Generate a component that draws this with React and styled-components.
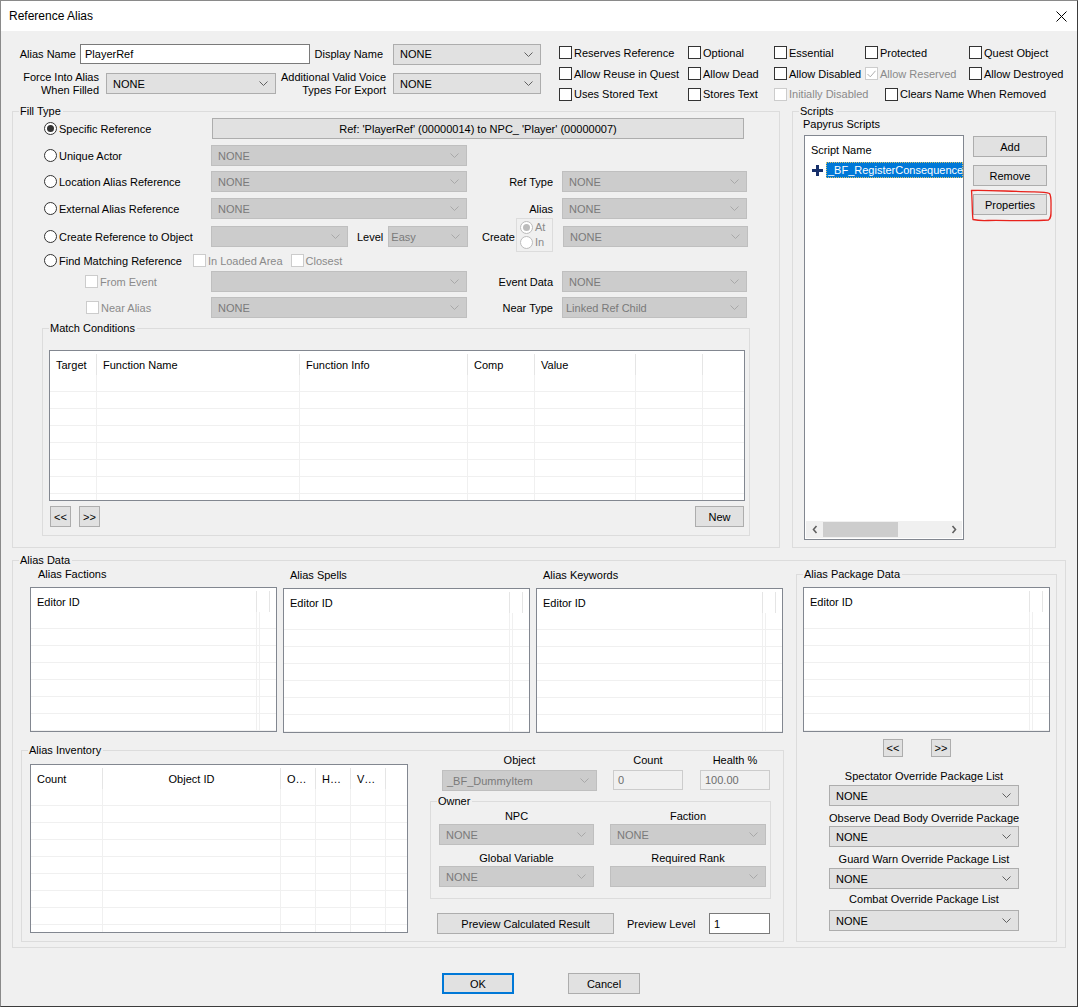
import React from 'react'
import styled, { createGlobalStyle } from 'styled-components'

const GlobalStyle = createGlobalStyle`
  html, body { margin: 0; padding: 0; background: #f0f0f0; }
  body { font-family: 'Liberation Sans', Arial, sans-serif; font-size: 11px; color: #000; }
  * { box-sizing: border-box; }
`

const Window = styled.div`
  width: 1078px;
  height: 1007px;
  border: 1px solid #8a8a8a;
  border-right-color: #3c3c3c;
  border-bottom-color: #3c3c3c;
  background: #f0f0f0;
  display: flex;
  flex-direction: column;
  overflow: hidden;
`

const TitleBar = styled.div`
  height: 30px;
  flex: none;
  background: #fff;
  display: flex;
  align-items: center;
  justify-content: space-between;
  padding: 0 10px 0 8px;
  font-size: 12px;
`

const Body = styled.div`
  flex: 1;
  padding: 11px 0 0 11px;
  display: flex;
  flex-direction: column;
`

const TopSection = styled.div`
  display: flex;
  height: 62px;
`

const TopFields = styled.div`
  width: 529px;
  padding-top: 2px;
  display: flex;
  flex-direction: column;
  gap: 9px;
`

const FieldRow = styled.div`
  display: flex;
  align-items: center;
  height: ${(p) => p.$h || 21}px;
`

const FieldLabel = styled.div`
  width: ${(p) => p.$w}px;
  text-align: right;
  line-height: 13px;
  flex: none;
`

const TextInput = styled.div`
  width: ${(p) => p.$w}px;
  height: ${(p) => p.$h || 20}px;
  margin-left: ${(p) => p.$ml || 0}px;
  flex: none;
  display: flex;
  align-items: center;
  padding-left: 4px;
  background: ${(p) => (p.$disabled ? '#f0f0f0' : '#fff')};
  border: 1px solid ${(p) => (p.$disabled ? '#cccccc' : '#7a7a7a')};
  color: ${(p) => (p.$disabled ? '#6d6d6d' : '#000')};
`

const ComboBox = styled.div`
  width: ${(p) => p.$w}px;
  height: ${(p) => p.$h || 21}px;
  margin-left: ${(p) => p.$ml || 0}px;
  margin-top: ${(p) => p.$mt || 0}px;
  flex: none;
  display: flex;
  align-items: center;
  padding-left: ${(p) => p.$pl ?? 6}px;
  background: ${(p) => (p.$disabled ? '#cccccc' : '#e1e1e1')};
  border: 1px solid ${(p) => (p.$disabled ? '#bfbfbf' : '#adadad')};
  color: ${(p) => (p.$disabled ? '#7a7a7a' : '#000')};
  white-space: nowrap;
  overflow: hidden;
`

const ChevronSvg = styled.svg`
  margin-left: auto;
  margin-right: 7px;
  flex: none;
`

const Combo = ({ children, disabled, ...rest }) => (
  <ComboBox $disabled={disabled} {...rest}>
    <span>{children}</span>
    <ChevronSvg width="9" height="5" viewBox="0 0 9 5">
      <path d="M0.5 0.5L4.5 4.5L8.5 0.5" fill="none" stroke={disabled ? '#a8a8a8' : '#606060'} />
    </ChevronSvg>
  </ComboBox>
)

const Button = styled.div`
  width: ${(p) => p.$w}px;
  height: ${(p) => p.$h || 21}px;
  margin-left: ${(p) => p.$ml || 0}px;
  flex: none;
  display: flex;
  align-items: center;
  justify-content: center;
  background: #e1e1e1;
  border: 1px solid ${(p) => (p.$default ? '#0078d7' : '#adadad')};
  box-shadow: ${(p) => (p.$default ? 'inset 0 0 0 1px #0078d7' : 'none')};
  white-space: nowrap;
`

const ChecksGrid = styled.div`
  margin-left: 18px;
  display: grid;
  grid-template-columns: 129px 86px 91px 104px 100px;
  grid-auto-rows: 21px;
`

const Option = styled.div`
  display: flex;
  align-items: center;
  gap: 2px;
  white-space: nowrap;
  height: ${(p) => p.$h || 21}px;
  padding-left: ${(p) => p.$indent || 0}px;
  margin-left: ${(p) => p.$ml || 0}px;
  color: ${(p) => (p.$disabled ? '#8a8a8a' : '#000')};
`

const Box = styled.span`
  width: 13px;
  height: 13px;
  flex: none;
  border: 1px solid ${(p) => (p.$disabled ? '#cccccc' : '#333')};
  background: #fff;
  display: flex;
  align-items: center;
  justify-content: center;
`

const RadioDot = styled.span`
  width: 13px;
  height: 13px;
  flex: none;
  border-radius: 50%;
  border: 1px solid ${(p) => (p.$disabled ? '#bcbcbc' : '#333')};
  background: #fff;
  display: flex;
  align-items: center;
  justify-content: center;

  &::after {
    content: '';
    width: 7px;
    height: 7px;
    border-radius: 50%;
    background: ${(p) => (p.$disabled ? '#bcbcbc' : '#333')};
    display: ${(p) => (p.$checked ? 'block' : 'none')};
  }
`

const Check = ({ label, checked, disabled, ...rest }) => (
  <Option $disabled={disabled} {...rest}>
    <Box $disabled={disabled}>
      {checked && (
        <svg width="9" height="8" viewBox="0 0 9 8">
          <path d="M0.5 4L3.3 6.8L8.5 0.8" fill="none" stroke={disabled ? '#adadad' : '#333'} />
        </svg>
      )}
    </Box>
    {label}
  </Option>
)

const Radio = ({ label, checked, disabled, ...rest }) => (
  <Option $disabled={disabled} {...rest}>
    <RadioDot $checked={checked} $disabled={disabled} />
    {label}
  </Option>
)

const MiddleRow = styled.div`
  display: flex;
  gap: 12px;
`

const Group = styled.fieldset`
  margin: 0;
  padding: 0;
  border: 1px solid #dcdcdc;
  min-width: 0;
  flex: none;
  width: ${(p) => p.$w}px;
  height: ${(p) => p.$h}px;
  margin-top: ${(p) => p.$mt || 0}px;
  margin-left: ${(p) => p.$ml || 0}px;
`

const Legend = styled.legend`
  margin-left: 6px;
  padding: 0 2px 0 1px;
  height: 14px;
  line-height: 14px;
`

const FillGrid = styled.div`
  display: grid;
  grid-template-columns: 198px 257px 94px 186px;
  grid-template-rows: 27px 26px 27px 28px 26px 19px 26px 21px;
  align-items: start;
`

const Cell = styled.div`
  display: flex;
  align-items: center;
  grid-column: ${(p) => p.$span || 'auto'};
  height: ${(p) => p.$h || 21}px;
`

const SideLabel = styled.div`
  height: 21px;
  display: flex;
  align-items: center;
  justify-content: flex-end;
  padding-right: 9px;
  gap: 1px;
`

const MiniGroup = styled.div`
  width: 37px;
  height: 34px;
  margin-top: -4px;
  border: 1px solid #dcdcdc;
  display: flex;
  flex-direction: column;
  justify-content: center;
  padding-left: 3px;
`

const InlineLabel = styled.span`
  margin-left: ${(p) => p.$ml || 0}px;
  white-space: nowrap;
`

const GroupInner = styled.div`
  padding: ${(p) => p.$pad || '0'};
`

const NavRow = styled.div`
  display: flex;
  align-items: center;
  margin-top: ${(p) => p.$mt || 5}px;
  margin-left: ${(p) => p.$ml || 0}px;
`

const ListBox = styled.div`
  width: ${(p) => p.$w}px;
  height: ${(p) => p.$h}px;
  flex: none;
  background: #fff;
  border: 1px solid #828790;
  overflow: hidden;
`

const ListHeader = styled.div`
  display: flex;
  height: 24px;
`

const HeaderCell = styled.div`
  flex: ${(p) => (p.$w ? 'none' : '1')};
  width: ${(p) => (p.$w ? `${p.$w}px` : 'auto')};
  padding: 0 6px;
  display: flex;
  align-items: center;
  justify-content: ${(p) => (p.$center ? 'center' : 'flex-start')};
  border-right: ${(p) => (p.$w ? '1px solid #e5e5e5' : 'none')};
  white-space: nowrap;
  overflow: hidden;
  margin: 3px 0 0;
`

const ListRow = styled.div`
  display: flex;
  height: 17px;
  border-bottom: 1px solid #f0f0f0;
`

const RowCell = styled.div`
  flex: ${(p) => (p.$w ? 'none' : '1')};
  width: ${(p) => (p.$w ? `${p.$w}px` : 'auto')};
  border-right: ${(p) => (p.$w ? '1px solid #f0f0f0' : 'none')};
`

const ListView = ({ w, h, cols, rows = 8 }) => (
  <ListBox $w={w} $h={h}>
    <ListHeader>
      {cols.map((c, i) => (
        <HeaderCell key={i} $w={c.w} $center={c.center}>
          {c.label}
        </HeaderCell>
      ))}
    </ListHeader>
    {Array.from({ length: rows }).map((_, r) => (
      <ListRow key={r}>
        {cols.map((c, i) => (
          <RowCell key={i} $w={c.w} />
        ))}
      </ListRow>
    ))}
  </ListBox>
)

const ScriptsInner = styled.div`
  padding-left: 10px;
`

const Caption = styled.div`
  line-height: 14px;
  height: 14px;
  margin-top: ${(p) => p.$mt || 0}px;
  padding-left: ${(p) => p.$pl || 0}px;
  text-align: ${(p) => (p.$center ? 'center' : 'left')};
  white-space: nowrap;
`

const ScriptsRow = styled.div`
  display: flex;
  margin-top: 4px;
`

const ScriptList = styled.div`
  width: 160px;
  height: 405px;
  margin-left: 1px;
  background: #fff;
  border: 1px solid #828790;
  display: flex;
  flex-direction: column;
  overflow: hidden;
`

const ScriptHeader = styled.div`
  height: 25px;
  display: flex;
  align-items: center;
  padding: 3px 0 0 6px;
`

const ScriptItem = styled.div`
  height: 18px;
  display: flex;
  align-items: center;
  padding-left: 7px;
  gap: 3px;
  white-space: nowrap;
  overflow: hidden;
`

const Selected = styled.span`
  flex: 1;
  min-width: 0;
  height: 16px;
  line-height: 16px;
  padding: 0 2px;
  background: #0078d7;
  color: #fff;
  outline: 1px dotted #d8c56a;
  outline-offset: -1px;
  overflow: hidden;
  text-overflow: clip;
`

const Spacer = styled.div`
  flex: 1;
`

const HScroll = styled.div`
  height: 17px;
  margin: 0 1px 1px;
  background: #f0f0f0;
  display: flex;
  align-items: center;
`

const ScrollArrow = styled.span`
  width: 17px;
  height: 17px;
  display: flex;
  align-items: center;
  justify-content: center;
`

const Thumb = styled.span`
  width: 75px;
  height: 15px;
  background: #cdcdcd;
`

const ButtonColumn = styled.div`
  margin-left: 9px;
  margin-top: 1px;
  display: flex;
  flex-direction: column;
  gap: 8px;
`

const Marked = styled.div`
  position: relative;
`

const MarkSvg = styled.svg`
  position: absolute;
  left: -3px;
  top: -5px;
  pointer-events: none;
`

const DataRow = styled.div`
  display: flex;
`

const LeftArea = styled.div`
  width: 771px;
  flex: none;
  display: flex;
  flex-direction: column;
`

const ListsRow = styled.div`
  display: flex;
  gap: 6px;
  padding-left: 17px;
`

const ListColumn = styled.div`
  display: flex;
  flex-direction: column;
`

const ListGap = styled.div`
  height: 6px;
`

const InvInner = styled.div`
  display: flex;
  align-items: flex-start;
  padding: 0 0 0 8px;
`

const InvListWrap = styled.div`
  padding-top: 7px;
`

const ObjectArea = styled.div`
  width: 341px;
  margin-left: 22px;
  margin-top: -4px;
  display: flex;
  flex-direction: column;
`

const ObjTopRow = styled.div`
  display: flex;
`

const ObjCol = styled.div`
  width: ${(p) => p.$w}px;
  margin-left: ${(p) => p.$ml}px;
  display: flex;
  flex-direction: column;
  align-items: center;
  gap: 2px;
`

const ObjCaption = styled.div`
  line-height: 15px;
  height: 15px;
`

const OwnerGrid = styled.div`
  display: grid;
  grid-template-columns: 155px 156px;
  column-gap: 16px;
  padding-left: 8px;
`

const OwnerCell = styled.div`
  display: flex;
  flex-direction: column;
  align-items: center;
  padding-top: ${(p) => p.$pt || 1}px;
  gap: 1px;
`

const PreviewRow = styled.div`
  display: flex;
  align-items: center;
  margin-top: 14px;
  padding: 0 1px 0 7px;
`

const PkgInner = styled.div`
  padding: 6px 0 0 6px;
`

const PkgStack = styled.div`
  width: 190px;
  margin-left: 26px;
  display: flex;
  flex-direction: column;
`

const Footer = styled.div`
  display: flex;
  justify-content: center;
  gap: 54px;
  margin-top: 25px;
  padding-right: 7px;
`

const editorCols = [{ label: 'Editor ID', w: 226 }, { label: '', w: 3 }, { label: '' }]

const App = () => (
  <Window>
    <GlobalStyle />
    <TitleBar>
      <span>Reference Alias</span>
      <svg width="11" height="11" viewBox="0 0 11 11">
        <path d="M0.5 0.5L10.5 10.5M10.5 0.5L0.5 10.5" stroke="#000" strokeWidth="1" />
      </svg>
    </TitleBar>
    <Body>
      <TopSection>
        <TopFields>
          <FieldRow $h={20}>
            <FieldLabel $w={64}>Alias Name</FieldLabel>
            <TextInput $w={230} $ml={4}>PlayerRef</TextInput>
            <FieldLabel $w={73}>Display Name</FieldLabel>
            <Combo $w={148} $ml={10}>NONE</Combo>
          </FieldRow>
          <FieldRow>
            <FieldLabel $w={87}>
              Force Into Alias
              <br />
              When Filled
            </FieldLabel>
            <Combo $w={170} $ml={7}>NONE</Combo>
            <FieldLabel $w={110}>
              Additional Valid Voice
              <br />
              Types For Export
            </FieldLabel>
            <Combo $w={148} $ml={7}>NONE</Combo>
          </FieldRow>
        </TopFields>
        <ChecksGrid>
          <Check label="Reserves Reference" />
          <Check label="Optional" />
          <Check label="Essential" />
          <Check label="Protected" />
          <Check label="Quest Object" />
          <Check label="Allow Reuse in Quest" />
          <Check label="Allow Dead" />
          <Check label="Allow Disabled" />
          <Check label="Allow Reserved" checked disabled />
          <Check label="Allow Destroyed" />
          <Check label="Uses Stored Text" $h={20} />
          <Check label="Stores Text" $h={20} />
          <Check label="Initially Disabled" disabled $h={20} />
          <Check label="Clears Name When Removed" $ml={20} $h={20} />
        </ChecksGrid>
      </TopSection>

      <MiddleRow>
        <Group $w={768} $h={444}>
          <Legend>Fill Type</Legend>
          <FillGrid>
            <Radio label="Specific Reference" checked $indent={31} />
            <Cell $span="2 / 5">
              <Button $w={532} $ml={1}>
                Ref: 'PlayerRef' (00000014) to NPC_ 'Player' (00000007)
              </Button>
            </Cell>

            <Radio label="Unique Actor" $indent={31} />
            <Combo $w={256} disabled>NONE</Combo>
            <span />
            <span />

            <Radio label="Location Alias Reference" $indent={31} />
            <Combo $w={256} disabled>NONE</Combo>
            <SideLabel>Ref Type</SideLabel>
            <Combo $w={185} disabled>NONE</Combo>

            <Radio label="External Alias Reference" $indent={31} />
            <Combo $w={256} disabled>NONE</Combo>
            <SideLabel>Alias</SideLabel>
            <Combo $w={185} disabled>NONE</Combo>

            <Radio label="Create Reference to Object" $indent={31} />
            <Cell>
              <Combo $w={137} disabled />
              <InlineLabel $ml={9}>Level</InlineLabel>
              <Combo $w={80} $ml={5} $pl={2} disabled>
                Easy
              </Combo>
            </Cell>
            <SideLabel>
              <span>Create</span>
              <MiniGroup>
                <Radio label="At" checked disabled $h={15} />
                <Radio label="In" disabled $h={15} />
              </MiniGroup>
            </SideLabel>
            <Combo $w={185} $ml={1} disabled>
              NONE
            </Combo>

            <Cell $span="1 / -1" $h={17}>
              <Radio label="Find Matching Reference" $indent={31} $h={17} />
              <Check label="In Loaded Area" disabled $ml={11} $h={17} />
              <Check label="Closest" disabled $ml={8} $h={17} />
            </Cell>

            <Check label="From Event" disabled $indent={72} />
            <Combo $w={256} disabled />
            <SideLabel>Event Data</SideLabel>
            <Combo $w={185} disabled>NONE</Combo>

            <Check label="Near Alias" disabled $indent={73} />
            <Combo $w={256} disabled>NONE</Combo>
            <SideLabel>Near Type</SideLabel>
            <Combo $w={185} $pl={3} disabled>
              Linked Ref Child
            </Combo>
          </FillGrid>

          <Group $w={708} $h={215} $mt={3} $ml={29}>
            <Legend>Match Conditions</Legend>
            <GroupInner $pad="15px 5px 0 6px">
              <ListView
                w={696}
                h={151}
                rows={8}
                cols={[
                  { label: 'Target', w: 47 },
                  { label: 'Function Name', w: 203 },
                  { label: 'Function Info', w: 168 },
                  { label: 'Comp', w: 67 },
                  { label: 'Value', w: 101 },
                  { label: '', w: 67 },
                  { label: '' },
                ]}
              />
              <NavRow $mt={5}>
                <Button $w={21} $ml={1}>&lt;&lt;</Button>
                <Button $w={21} $ml={8}>&gt;&gt;</Button>
                <Spacer />
                <Button $w={49}>New</Button>
              </NavRow>
            </GroupInner>
          </Group>
        </Group>

        <Group $w={264} $h={444}>
          <Legend>Scripts</Legend>
          <ScriptsInner>
            <Caption $mt={-1}>Papyrus Scripts</Caption>
            <ScriptsRow>
              <ScriptList>
                <ScriptHeader>Script Name</ScriptHeader>
                <ScriptItem>
                  <svg width="11" height="11" viewBox="0 0 11 11">
                    <path d="M4 0h3v4h4v3H7v4H4V7H0V4h4z" fill="#17306b" />
                  </svg>
                  <Selected>_BF_RegisterConsequenceF</Selected>
                </ScriptItem>
                <Spacer />
                <HScroll>
                  <ScrollArrow>
                    <svg width="6" height="9" viewBox="0 0 6 9">
                      <path d="M4.5 1L1.5 4.5L4.5 8" fill="none" stroke="#606060" strokeWidth="1.6" />
                    </svg>
                  </ScrollArrow>
                  <Thumb />
                  <Spacer />
                  <ScrollArrow>
                    <svg width="6" height="9" viewBox="0 0 6 9">
                      <path d="M1.5 1L4.5 4.5L1.5 8" fill="none" stroke="#606060" strokeWidth="1.6" />
                    </svg>
                  </ScrollArrow>
                </HScroll>
              </ScriptList>
              <ButtonColumn>
                <Button $w={74}>Add</Button>
                <Button $w={74}>Remove</Button>
                <Marked>
                  <Button $w={74}>Properties</Button>
                  <MarkSvg width="86" height="34" viewBox="0 0 86 34">
                    <path
                      d="M1.5 1.5C14 0.8 40 2.5 62 2.8C70 3 76 3 79.5 4.5C81.5 7 81 13 81 19C81 25 81.5 29 78.5 31C60 32.5 34 31 18 31.5C11 31.8 6 31.2 3 30.5C2 24 2.5 14 1.5 1.5Z"
                      fill="none"
                      stroke="#e8221c"
                      strokeWidth="1.3"
                    />
                  </MarkSvg>
                </Marked>
              </ButtonColumn>
            </ScriptsRow>
          </ScriptsInner>
        </Group>
      </MiddleRow>

      <Group $w={1054} $h={395} $mt={5}>
        <Legend>Alias Data</Legend>
        <DataRow>
          <LeftArea>
            <ListsRow>
              <ListColumn>
                <Caption $pl={8}>Alias Factions</Caption>
                <ListGap />
                <ListView w={247} h={145} rows={7} cols={editorCols} />
              </ListColumn>
              <ListColumn>
                <Caption $mt={1} $pl={7}>Alias Spells</Caption>
                <ListGap />
                <ListView w={247} h={145} rows={7} cols={editorCols} />
              </ListColumn>
              <ListColumn>
                <Caption $mt={1} $pl={7}>Alias Keywords</Caption>
                <ListGap />
                <ListView w={247} h={145} rows={7} cols={editorCols} />
              </ListColumn>
            </ListsRow>

            <Group $w={763} $h={199} $mt={10} $ml={8}>
              <Legend>Alias Inventory</Legend>
              <InvInner>
                <InvListWrap>
                  <ListView
                    w={378}
                    h={169}
                    rows={9}
                    cols={[
                      { label: 'Count', w: 72 },
                      { label: 'Object ID', w: 178, center: true },
                      { label: 'O…', w: 35 },
                      { label: 'H…', w: 35 },
                      { label: 'V…', w: 35 },
                      { label: '' },
                    ]}
                  />
                </InvListWrap>
                <ObjectArea>
                  <ObjTopRow>
                    <ObjCol $w={155} $ml={12}>
                      <ObjCaption>Object</ObjCaption>
                      <Combo $w={155} $pl={4} disabled>
                        _BF_DummyItem
                      </Combo>
                    </ObjCol>
                    <ObjCol $w={70} $ml={16}>
                      <ObjCaption>Count</ObjCaption>
                      <TextInput $w={70} $disabled>
                        0
                      </TextInput>
                    </ObjCol>
                    <ObjCol $w={70} $ml={17}>
                      <ObjCaption>Health %</ObjCaption>
                      <TextInput $w={70} $disabled>
                        100.00
                      </TextInput>
                    </ObjCol>
                  </ObjTopRow>
                  <Group $w={341} $h={105} $mt={3}>
                    <Legend>Owner</Legend>
                    <OwnerGrid>
                      <OwnerCell>
                        <Caption>NPC</Caption>
                        <Combo $w={155} disabled>NONE</Combo>
                      </OwnerCell>
                      <OwnerCell>
                        <Caption>Faction</Caption>
                        <Combo $w={156} disabled>NONE</Combo>
                      </OwnerCell>
                      <OwnerCell $pt={6}>
                        <Caption>Global Variable</Caption>
                        <Combo $w={155} disabled>NONE</Combo>
                      </OwnerCell>
                      <OwnerCell $pt={6}>
                        <Caption>Required Rank</Caption>
                        <Combo $w={156} disabled />
                      </OwnerCell>
                    </OwnerGrid>
                  </Group>
                  <PreviewRow>
                    <Button $w={177}>Preview Calculated Result</Button>
                    <InlineLabel $ml={13}>Preview Level</InlineLabel>
                    <Spacer />
                    <TextInput $w={61} $h={21}>
                      1
                    </TextInput>
                  </PreviewRow>
                </ObjectArea>
              </InvInner>
            </Group>
          </LeftArea>

          <Group $w={261} $h={375} $ml={12}>
            <Legend>Alias Package Data</Legend>
            <PkgInner>
              <ListView w={247} h={145} rows={7} cols={editorCols} />
              <NavRow $mt={7} $ml={80}>
                <Button $w={20} $h={18}>&lt;&lt;</Button>
                <Button $w={20} $h={18} $ml={28}>
                  &gt;&gt;
                </Button>
              </NavRow>
              <PkgStack>
                <Caption $center $mt={12}>Spectator Override Package List</Caption>
                <Combo $w={190} $mt={2}>NONE</Combo>
                <Caption $center $mt={5}>Observe Dead Body Override Package</Caption>
                <Combo $w={190} $mt={1}>NONE</Combo>
                <Caption $center $mt={5}>Guard Warn Override Package List</Caption>
                <Combo $w={190} $mt={2}>NONE</Combo>
                <Caption $center $mt={3}>Combat Override Package List</Caption>
                <Combo $w={190} $mt={4}>NONE</Combo>
              </PkgStack>
            </PkgInner>
          </Group>
        </DataRow>
      </Group>

      <Footer>
        <Button $w={72} $default>
          OK
        </Button>
        <Button $w={72}>Cancel</Button>
      </Footer>
    </Body>
  </Window>
)

export default App
